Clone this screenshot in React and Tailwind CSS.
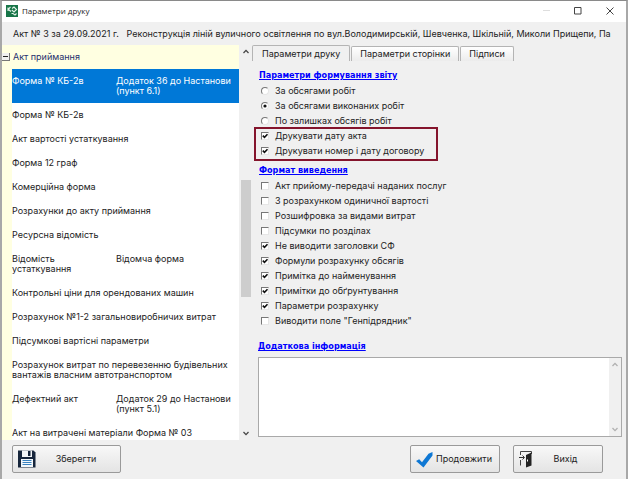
import { useState } from 'react'
import clsx from 'clsx'

const FORMS = [
  { name: 'Форма № КБ-2в', note: 'Додаток 36 до Настанови (пункт 6.1)' },
  { name: 'Форма № КБ-2в' },
  { name: 'Акт вартості устаткування' },
  { name: 'Форма 12 граф' },
  { name: 'Комерційна форма' },
  { name: 'Розрахунки до акту приймання' },
  { name: 'Ресурсна відомість' },
  { name: 'Відомість устаткування', note: 'Відомча форма' },
  { name: 'Контрольні ціни для орендованих машин' },
  { name: 'Розрахунок №1-2 загальновиробничих витрат' },
  { name: 'Підсумкові вартісні параметри' },
  { name: 'Розрахунок витрат по перевезенню будівельних вантажів власним автотранспортом' },
  { name: 'Дефектний акт', note: 'Додаток 29 до Настанови (пункт 5.1)' },
  { name: 'Акт на витрачені матеріали Форма № 03' },
]

const SCOPES = ['За обсягами робіт', 'За обсягами виконаних робіт', 'По залишках обсягів робіт']

const CONTRACT_OPTIONS = ['Друкувати дату акта', 'Друкувати номер і дату договору']

const OUTPUT_OPTIONS = [
  'Акт прийому-передачі наданих послуг',
  'З розрахунком одиничної вартості',
  'Розшифровка за видами витрат',
  'Підсумки по розділах',
  'Не виводити заголовки СФ',
  'Формули розрахунку обсягів',
  'Примітка до найменування',
  'Примітки до обґрунтування',
  'Параметри розрахунку',
  'Виводити поле "Генпідрядник"',
]

const TABS = ['Параметри друку', 'Параметри сторінки', 'Підписи']

export default function App() {
  const [selected, setSelected] = useState(0)
  const [tab, setTab] = useState(0)
  const [scope, setScope] = useState(1)
  const [checked, setChecked] = useState([
    ...CONTRACT_OPTIONS,
    ...OUTPUT_OPTIONS.slice(4, 9),
  ])
  const [info, setInfo] = useState('')

  const toggle = (label) => {
    setChecked(prev => prev.includes(label) ? prev.filter(l => l !== label) : [...prev, label])
  }

  return (
    <div className="flex flex-col h-screen overflow-hidden bg-[#f0f0f0] border-t border-x-2 border-t-[#8a8a8a] border-x-[#a8a8a8] font-[Inter,sans-serif] text-[9px] leading-[10px] text-[#222]">
      <TitleBar />

      <p className="shrink-0 h-[23px] pl-[11px] leading-[23px] whitespace-pre overflow-hidden">
        {'Акт № 3 за 29.09.2021 г.   Реконструкція ліній вуличного освітлення по вул.Володимирській, Шевченка, Шкільній, Миколи Прищепи, Па'}
      </p>

      {/* ── Main Layout ── */}
      <div className="flex flex-1 min-h-0">
        <FormTree selected={selected} onSelect={setSelected} />

        <main className="flex flex-col flex-1 min-w-0 pr-1">
          <div role="tablist" className="flex items-end gap-px h-4">
            {TABS.map((label, i) => (
              <button
                key={label}
                role="tab"
                aria-selected={tab === i}
                onClick={() => setTab(i)}
                className={clsx(
                  'border border-b-0 border-[#b4b4b4] rounded-t-xs whitespace-nowrap',
                  tab === i ? 'h-4 px-[9px] bg-[#f0f0f0]' : 'h-[15px] px-2 bg-linear-to-b from-white to-[#ececec]'
                )}
              >
                {label}
              </button>
            ))}
          </div>

          <section className="pl-[7px] pt-[7px]">
            <Heading>Параметри формування звіту</Heading>
            {SCOPES.map((label, i) => (
              <Option key={label} type="radio" label={label} checked={scope === i} onChange={() => setScope(i)} />
            ))}
            <div className="relative w-[179px]">
              {CONTRACT_OPTIONS.map(label => (
                <Option key={label} label={label} checked={checked.includes(label)} onChange={() => toggle(label)} />
              ))}
              <div className="absolute -top-px -bottom-[3px] -left-[5px] right-0 border-2 border-[#84142c] pointer-events-none" />
            </div>
          </section>

          <section className="pl-[7px] pt-[5px]">
            <Heading>Формат виведення</Heading>
            {OUTPUT_OPTIONS.map(label => (
              <Option key={label} label={label} checked={checked.includes(label)} onChange={() => toggle(label)} />
            ))}
          </section>

          <section className="flex flex-col flex-1 min-h-0 pl-[6px] pt-[11px] pb-[3px]">
            <label htmlFor="info" className="h-[18px] leading-[15px] font-bold font-['DejaVu_Sans_Condensed','DejaVu_Sans',sans-serif] underline text-[#0000ff]">
              Додаткова інформація
            </label>
            <div className="flex flex-1 min-h-0 border border-[#a9a9a9] bg-white">
              <textarea
                id="info"
                value={info}
                onChange={e => setInfo(e.target.value)}
                className="flex-1 min-w-0 p-1 resize-none outline-none"
              />
              <div className="flex flex-col justify-between items-center w-3 py-1 bg-[#f0f0f0] text-[#b0b0b0]">
                <Chevron />
                <Chevron down />
              </div>
            </div>
          </section>
        </main>
      </div>

      {/* ── Footer ── */}
      <footer className="flex shrink-0 gap-[13px] h-[39px] pt-[5px] pl-[10px] pr-[23px]">
        <PushButton className="w-[109px] mr-auto" icon={<FloppyIcon />}>Зберегти</PushButton>
        <PushButton className="w-[90px]" icon={<CheckIcon />}>Продовжити</PushButton>
        <PushButton className="w-[90px]" icon={<DoorIcon />}>Вихід</PushButton>
      </footer>
    </div>
  )
}

function TitleBar() {
  return (
    <header className="flex items-center shrink-0 h-[21px] pl-1 pb-[2px] bg-white">
      <LogoIcon />
      <h1 className="ml-1 mr-auto font-['Open_Sans',sans-serif] text-[8px]">Параметри друку</h1>
      <button aria-label="Згорнути" className="grid place-items-center w-8 h-5">
        <svg width="7" height="7" viewBox="0 0 7 7" stroke="#dedede"><path d="M0 3.5h7" /></svg>
      </button>
      <button aria-label="Розгорнути" className="grid place-items-center w-8 h-5">
        <svg width="8" height="8" viewBox="0 0 8 8" fill="none" stroke="#444"><path d="M.5.5h6.500v6.500H.5z" /></svg>
      </button>
      <button aria-label="Закрити" className="grid place-items-center w-8 h-5">
        <svg width="8" height="8" viewBox="0 0 8 8" fill="none" stroke="#444"><path d="M.5.5l7 7M7.500.5l-7 7" /></svg>
      </button>
    </header>
  )
}

function FormTree({ selected, onSelect }) {
  return (
    <aside className="flex w-[250px] shrink-0">
      <div className="flex-1 min-w-0 overflow-hidden bg-[#ffffe1]">
        <div className="flex items-center h-6 text-[#26306e]">
          <button aria-label="Згорнути групу" className="grid place-items-center size-2 mr-[3px] bg-[#f0f0f0] border-r border-b border-[#777]">
            <svg width="5" height="5" viewBox="0 0 5 5" stroke="#222"><path d="M0 2.5h5" /></svg>
          </button>
          Акт приймання
        </div>
        <ul className="ml-[10px] bg-white">
          {FORMS.map((form, i) => (
            <li key={i}>
              <button
                onClick={() => onSelect(i)}
                className={clsx('flex w-full py-[7px] text-left', selected === i && 'bg-[#0078d7] text-white')}
              >
                <span className={form.note ? 'w-[104px] pr-2' : 'flex-1'}>{form.name}</span>
                {form.note && <span className="flex-1">{form.note}</span>}
              </button>
            </li>
          ))}
        </ul>
      </div>
      <div className="flex flex-col items-center w-3 py-1 ml-px text-[#444]">
        <Chevron />
        <div className="flex-[126]" />
        <div className="flex-[117] w-[10px] bg-[#cdcdcd]" />
        <div className="flex-[134]" />
        <Chevron down />
      </div>
    </aside>
  )
}

function Heading({ children }) {
  return (
    <h2 className="h-[15px] leading-[15px] font-bold font-['DejaVu_Sans_Condensed','DejaVu_Sans',sans-serif] underline text-[#0000ff]">
      {children}
    </h2>
  )
}

function Option({ type = 'checkbox', label, checked, onChange }) {
  const radio = type === 'radio'
  return (
    <label className="flex items-center h-[15px] pl-[2px] whitespace-nowrap">
      <span className="grid mr-[6px]">
        <input
          type={type}
          checked={checked}
          onChange={onChange}
          className={clsx(
            'col-start-1 row-start-1 appearance-none size-2 bg-white border border-t-[#777] border-l-[#777] border-r-[#e6e6e6] border-b-[#e6e6e6]',
            radio && 'rounded-full'
          )}
        />
        {checked && (
          <svg className="col-start-1 row-start-1 pointer-events-none" width="8" height="8" viewBox="0 0 8 8">
            {radio
              ? <circle cx="4" cy="4" r="1.6" fill="#111" />
              : <path d="M1.8 3.6l1.7 1.8 3-3.2" fill="none" stroke="#111" strokeWidth="1.6" />}
          </svg>
        )}
      </span>
      {label}
    </label>
  )
}

function PushButton({ icon, className, children }) {
  return (
    <button className={clsx('flex items-center h-7 pl-[5px] pr-1 border border-[#9a9a9a] rounded-xs bg-linear-to-b from-[#f8f8f8] to-[#e4e4e4]', className)}>
      {icon}
      <span className="flex-1 text-center">{children}</span>
    </button>
  )
}

function Chevron({ down }) {
  return (
    <svg width="6" height="5" viewBox="0 0 6 5" fill="none" stroke="currentColor" strokeWidth="1.3">
      <path d={down ? 'M.5 1L3 3.6 5.500 1' : 'M.5 4L3 1.400 5.500 4'} />
    </svg>
  )
}

function LogoIcon() {
  return (
    <svg width="12" height="12" viewBox="0 0 12 12">
      <path d="M0 0h12v12H0z" fill="#177548" />
      <path d="M2 2.500v3.500M2.200 4.300l2.300-2.300M2.500 4.500l2.500 2M6 3.500l2-1.500L10.500 4.500 8 7 5.800 5M5.500 8.500h1.500l2 1.500 1.500-1.500" fill="none" stroke="#e4f3e9" strokeWidth="1.1" />
    </svg>
  )
}

function FloppyIcon() {
  return (
    <svg width="18" height="18" viewBox="0 0 18 18" className="shrink-0">
      <path d="M0 .5h15.500L17.500 2.500v15H0z" fill="#17263c" />
      <path d="M4 .5h10v6.500H4z" fill="#f4f6f8" />
      <path d="M10 1h2.500v5H10z" fill="#17263c" />
      <path d="M3 9h12v8H3z" fill="#f4f8fb" />
      <path d="M4.500 10.500h9M4.500 12.500h9M4.500 14.500h9" stroke="#3a83c0" />
    </svg>
  )
}

function CheckIcon() {
  return (
    <svg width="17" height="17" viewBox="0 0 17 17" className="shrink-0">
      <path d="M0 10l3.200-1.800L6 11.200 12.500 2.800 16.500 1v3.500L7.500 16.500z" fill="#0f78d4" />
    </svg>
  )
}

function DoorIcon() {
  return (
    <svg width="14" height="18" viewBox="0 0 14 18" className="shrink-0">
      <path d="M1.500 5V1.500H12.500V4M1.500 10v5.500" fill="none" stroke="#444" />
      <path d="M0 7.500h5M3.500 5.500l2 2-2 2" fill="none" stroke="#333" />
      <path d="M7 5l5.500-2.500v13L7 17.500z" fill="#222" />
      <path d="M8.500 9.500v2" stroke="#fff" />
    </svg>
  )
}
